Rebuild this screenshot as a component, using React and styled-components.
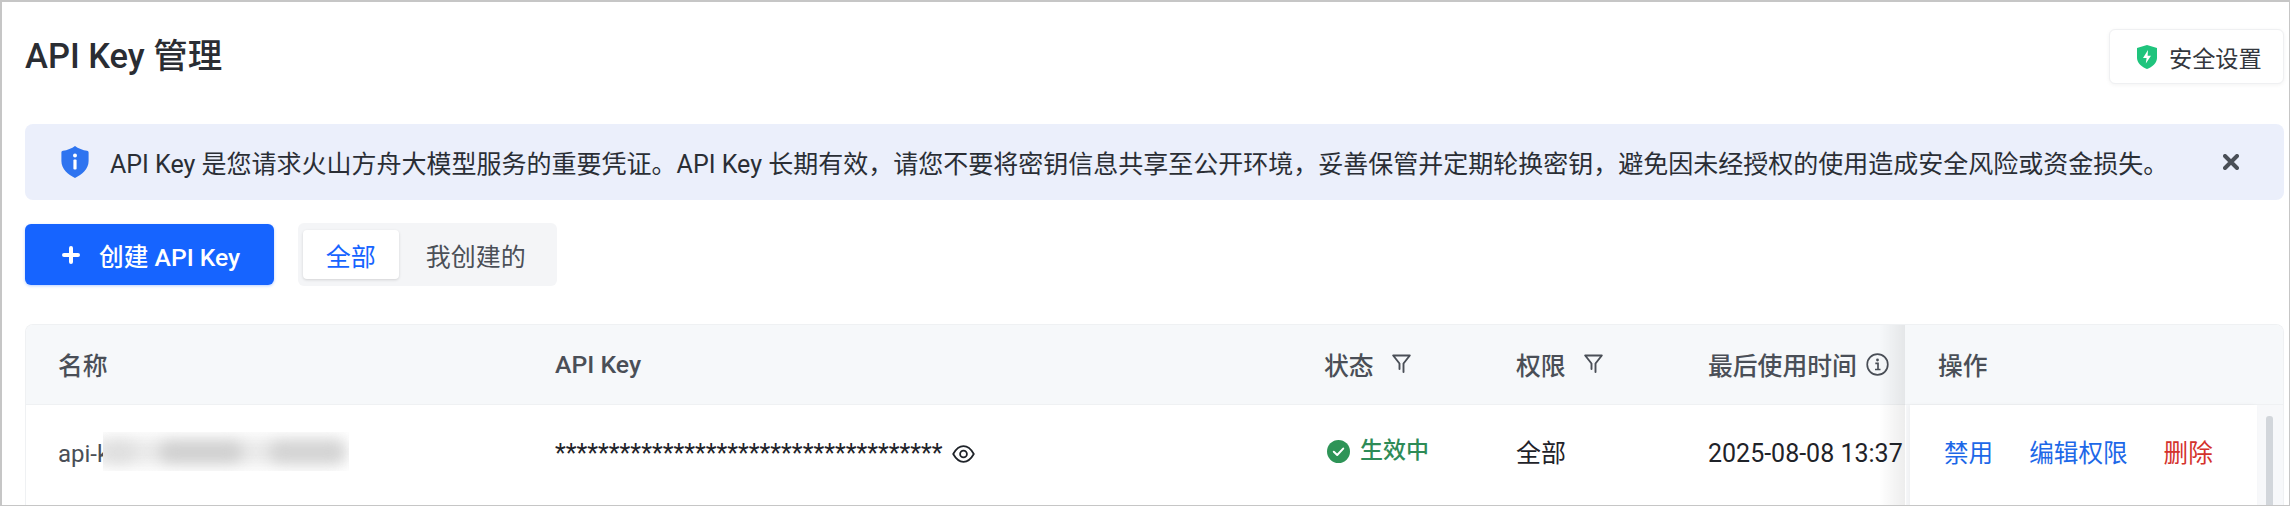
import React from "react";
import styled, { createGlobalStyle } from "styled-components";

const Global = createGlobalStyle`
  html, body { margin: 0; padding: 0; background: #fff; }
  body { font-family: Roboto, "Noto Sans CJK SC", sans-serif; }
  * { box-sizing: border-box; }
`;

const Page = styled.div`
  width: 2290px; height: 506px; overflow: hidden; background: #fff;
  border: 2px solid #c6c6c6; border-width: 2px 1px 1px 2px;
  padding: 27px 5px 0 23px; color: #1f2329;
`;
const Header = styled.header`
  display: flex; justify-content: space-between; align-items: center; height: 55px;
`;
const Title = styled.h1`
  margin: 0; font-size: 34.5px; font-weight: 500; line-height: 55px; color: #2a2d33;
`;
const SecurityButton = styled.button`
  display: flex; align-items: center; gap: 12px; width: 175px; height: 55px; padding: 0 0 0 27px;
  background: #fff; border: 1px solid #eff0f2; border-radius: 6px;
  box-shadow: 0 1px 4px rgba(0,0,0,.05);
  font: 400 23.2px Roboto, "Noto Sans CJK SC", sans-serif; color: #33373d;
`;
const Alert = styled.div`
  display: flex; align-items: center; height: 76px; margin-top: 40px; padding: 0 45px 0 36px;
  background: #ebeffb; border-radius: 8px; font-size: 25px; color: #2a2e35;
`;
const AlertText = styled.span`
  flex: 1; margin-left: 21px; white-space: nowrap;
`;
const Toolbar = styled.div`
  display: flex; align-items: center; gap: 24px; height: 63px; margin-top: 23px;
`;
const PrimaryButton = styled.button`
  display: flex; align-items: center; gap: 19px; width: 249px; height: 61px; padding: 0 0 0 37px;
  background: #1664ff; color: #fff; border: 0; border-radius: 6px;
  box-shadow: 0 1px 3px rgba(22,100,255,.3);
  font: 500 24.7px Roboto, "Noto Sans CJK SC", sans-serif;
`;
const Segment = styled.div`
  display: flex; width: 259px; height: 63px; padding: 7px 4px 7px 5px; background: #f4f5f7; border-radius: 6px;
`;
const SegmentItem = styled.div`
  display: flex; align-items: center; justify-content: center; height: 49px; font-size: 25px;
  width: ${p => (p.$active ? "98px" : "158px")};
  border-radius: 4px;
  color: ${p => (p.$active ? "#1664ff" : "#4b5058")};
  background: ${p => (p.$active ? "#fff" : "transparent")};
  box-shadow: ${p => (p.$active ? "0 1px 3px rgba(0,0,0,.14)" : "none")};
`;
const Table = styled.section`
  position: relative; height: 300px; margin-top: 38px; width: 2259px; border: 1px solid #eff1f3;
  border-bottom: 0; border-radius: 8px 8px 0 0; overflow: hidden;
`;
const Cols = "497px 769px 192px 192px 230px 377px";
const HeadRow = styled.div`
  display: grid; grid-template-columns: ${Cols}; height: 80px; background: #f6f8fa;
  border-bottom: 1px solid #eff1f3; font-size: 24.8px; color: #4a4f57;
`;
const BodyRow = styled.div`
  display: grid; grid-template-columns: ${Cols}; height: 220px; background: #fff;
  font-size: 25px; color: #1f2329;
`;
const HeadCell = styled.div`
  display: flex; align-items: center; gap: ${p => p.$gap || 0}px; padding-left: 32px; white-space: nowrap; font-weight: 500;
  overflow: hidden; padding-bottom: 1px;
`;
const Cell = styled.div`
  display: flex; align-items: flex-start; padding: 31px 0 0 32px; white-space: nowrap; overflow: hidden;
  line-height: 36px;
`;
const FixedHead = styled(HeadCell)`
  position: relative; z-index: 2; background: #f6f8fa;
`;
const ShadowEdge = styled.div`
  position: absolute; left: 1853px; top: 0; bottom: 0; width: 26px; z-index: 1;
  background: linear-gradient(to right, rgba(0,0,0,0), rgba(0,0,0,.07));
`;
const NameCell = styled(Cell)`
  color: #4a4f57; font-size: 24px;
`;
const NameText = styled.span`
  display: block; width: 45px; overflow: hidden; flex: none;
`;
const Redact = styled.div`
  width: 246px; height: 39px; margin: -4px 0 0 0; overflow: hidden; position: relative;
  display: flex; align-items: center; flex: none;
`;
const RedactHaze = styled.i`
  position: absolute; left: -10px; right: 4px; top: 6px; height: 27px; background: #eaeaea; filter: blur(7px);
`;
const RedactBlob = styled.i`
  position: relative; display: block; flex: none; height: 20px; border-radius: 10px; filter: blur(7px);
  width: ${p => p.$w}px; margin-right: ${p => p.$gap}px; background: ${p => p.$c};
`;
const Masked = styled.span`
  font-size: 25px; color: #1f2329; font-family: Roboto, sans-serif; line-height: 36px;
`;
const Status = styled.span`
  display: flex; align-items: center; gap: 10px; margin: -3px 0 0 3px; color: #2e8b57; font-size: 23px; font-weight: 500;
`;
const ActionCell = styled.div`
  position: relative; z-index: 2; display: flex; background: #f7f8fa;
`;
const ActionInner = styled.div`
  display: flex; align-items: flex-start; gap: 36px; width: 347px; margin-left: 4px; padding: 31px 0 0 34px;
  background: #fff; box-shadow: -2px 0 4px rgba(0,0,0,.04); line-height: 36px;
`;
const Action = styled.a`
  color: ${p => (p.$danger ? "#d4322c" : "#1d68e8")}; font-size: 24.6px; white-space: nowrap;
`;
const Scrollbar = styled.div`
  width: 7px; height: 200px; margin: 11px 0 0 9px; background: #d2d6db; border-radius: 3px;
`;

const InfoShield = () => (
  <svg width="28" height="32" viewBox="0 0 28 32">
    <path d="M14 0 C17 2.5 22 4.2 26 4.8 C27 5 27.6 5.6 27.6 6.6 V15 C27.6 23 21 28.5 14 32 C7 28.5 .4 23 .4 15 V6.6 C.4 5.6 1 5 2 4.8 C6 4.2 11 2.5 14 0 Z" fill="#2e74f0" />
    <circle cx="14" cy="9.5" r="2" fill="#fff" />
    <rect x="12.4" y="13.5" width="3.2" height="10" rx="1" fill="#fff" />
  </svg>
);
const BoltShield = () => (
  <svg width="20" height="24" viewBox="0 0 20 24">
    <path d="M10 0 L20 3 V13 C20 18 15 22 10 24 C5 22 0 18 0 13 V3 Z" fill="#1fc47d" />
    <path d="M11 5 L6 13 H9.6 L8.8 18.5 L14 10.8 H10.6 Z" fill="#fff" />
  </svg>
);
const Plus = () => (
  <svg width="18" height="18" viewBox="0 0 18 18">
    <path d="M9 2 V16 M2 9 H16" stroke="#fff" strokeWidth="4" strokeLinecap="round" />
  </svg>
);
const Close = () => (
  <svg width="16" height="16" viewBox="0 0 16 16">
    <path d="M2 2 L14 14 M14 2 L2 14" stroke="#4a4f57" strokeWidth="4" strokeLinecap="round" />
  </svg>
);
const Funnel = () => (
  <svg width="19" height="20" viewBox="0 0 19 20" fill="none">
    <path d="M1.2 1.5 H17.8 L11.5 9.5 V18 M1.2 1.5 L7.5 9.5 V15" stroke="#4a4f57" strokeWidth="1.9" strokeLinejoin="round" strokeLinecap="round" />
  </svg>
);
const Info = () => (
  <svg width="23" height="23" viewBox="0 0 23 23" fill="none">
    <circle cx="11.5" cy="11.5" r="10.3" stroke="#4a4f57" strokeWidth="1.7" />
    <circle cx="11.5" cy="7" r="1.4" fill="#4a4f57" />
    <path d="M9.3 10.3 H12 V16.5 M9 16.5 H14.5" stroke="#4a4f57" strokeWidth="1.7" />
  </svg>
);
const Eye = () => (
  <svg width="23" height="18" viewBox="0 0 23 18" fill="none" style={{ flex: "none" }}>
    <path d="M1.2 9 C4 4 7.5 1.2 11.5 1.2 C15.5 1.2 19 4 21.8 9 C19 14 15.5 16.8 11.5 16.8 C7.5 16.8 4 14 1.2 9 Z" stroke="#1f2329" strokeWidth="1.8" strokeLinejoin="round" />
    <circle cx="11.5" cy="9" r="3.4" stroke="#1f2329" strokeWidth="1.8" />
  </svg>
);
const Check = () => (
  <svg width="23" height="23" viewBox="0 0 23 23">
    <circle cx="11.5" cy="11.5" r="11.5" fill="#2e9457" />
    <path d="M6.8 11.8 L10.2 15 L16.2 8.6" stroke="#fff" strokeWidth="2" fill="none" strokeLinecap="round" strokeLinejoin="round" />
  </svg>
);
const EyeGap = styled.span` display: inline-flex; margin: 9px 0 0 9px; `;
const AlertIcon = styled.span` display: flex; flex: none; `;

export default function App() {
  return (
    <>
      <Global />
      <Page>
        <Header>
          <Title>API Key 管理</Title>
          <SecurityButton><BoltShield />安全设置</SecurityButton>
        </Header>
        <Alert>
          <AlertIcon><InfoShield /></AlertIcon>
          <AlertText>API Key 是您请求火山方舟大模型服务的重要凭证。API Key 长期有效，请您不要将密钥信息共享至公开环境，妥善保管并定期轮换密钥，避免因未经授权的使用造成安全风险或资金损失。</AlertText>
          <Close />
        </Alert>
        <Toolbar>
          <PrimaryButton><Plus />创建 API Key</PrimaryButton>
          <Segment>
            <SegmentItem $active>全部</SegmentItem>
            <SegmentItem>我创建的</SegmentItem>
          </Segment>
        </Toolbar>
        <Table>
          <HeadRow>
            <HeadCell>名称</HeadCell>
            <HeadCell>API Key</HeadCell>
            <HeadCell $gap={18}>状态<Funnel /></HeadCell>
            <HeadCell $gap={18}>权限<Funnel /></HeadCell>
            <HeadCell $gap={9}>最后使用时间<Info /></HeadCell>
            <FixedHead>操作</FixedHead>
          </HeadRow>
          <BodyRow>
            <NameCell>
              <NameText>api-k</NameText>
              <Redact>
                <RedactHaze />
                <RedactBlob $w={32} $gap={24} $c="#dedede" />
                <RedactBlob $w={84} $gap={26} $c="#cfcfcf" />
                <RedactBlob $w={76} $gap={0} $c="#d2d2d2" />
              </Redact>
            </NameCell>
            <Cell><Masked>{"*".repeat(36)}</Masked><EyeGap><Eye /></EyeGap></Cell>
            <Cell><Status><Check />生效中</Status></Cell>
            <Cell>全部</Cell>
            <Cell>2025-08-08 13:37</Cell>
            <ActionCell>
              <ActionInner>
                <Action>禁用</Action>
                <Action>编辑权限</Action>
                <Action $danger>删除</Action>
              </ActionInner>
              <Scrollbar />
            </ActionCell>
          </BodyRow>
          <ShadowEdge />
        </Table>
      </Page>
    </>
  );
}
